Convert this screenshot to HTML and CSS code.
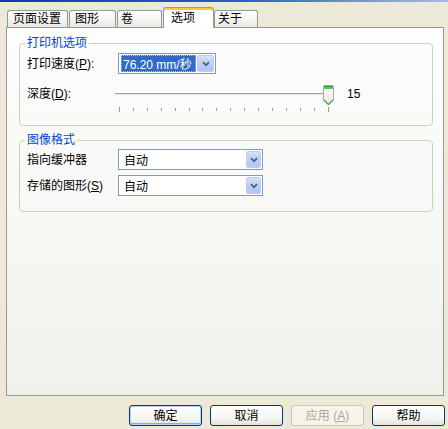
FILE: index.html
```html
<!DOCTYPE html>
<html lang="zh-CN">
<head>
<meta charset="utf-8">
<title>选项</title>
<link rel="stylesheet" href="styles.css">
</head>
<body>
<div class="edge"></div>
<div class="tabs">
  <div class="tab w1">页面设置</div>
  <div class="tab w2">图形</div>
  <div class="tab w3">卷</div>
  <div class="tab sel">选项</div>
  <div class="tab w5">关于</div>
</div>
<div class="panel">
  <fieldset class="group g1">
    <legend>打印机选项</legend>
    <div class="row">
      <span class="lbl">打印速度(<u>P</u>):</span>
      <div class="combo speed">
        <span class="val hl">76.20 mm/秒</span>
        <span class="drop d17"><svg width="8" height="6" viewBox="0 0 8 6"><path d="M1 1.2 L4 4.3 L7 1.2" fill="none" stroke="#4D6185" stroke-width="1.8"/></svg></span>
      </div>
    </div>
    <div class="row slider-row">
      <span class="lbl short">深度(<u>D</u>):</span>
      <svg class="slider" width="228" height="30" viewBox="0 0 228 30">
        <line x1="3" y1="10.5" x2="221" y2="10.5" stroke="#A3A29A" stroke-width="1"/>
        <line x1="3" y1="11.5" x2="221" y2="11.5" stroke="#E4E3DC" stroke-width="1"/>
        <g fill="#9C9C94">
          <rect x="7" y="24" width="1" height="5"/>
          <rect x="21" y="25" width="1" height="3"/>
          <rect x="35" y="25" width="1" height="3"/>
          <rect x="49" y="25" width="1" height="3"/>
          <rect x="63" y="25" width="1" height="3"/>
          <rect x="77" y="25" width="1" height="3"/>
          <rect x="90" y="25" width="1" height="3"/>
          <rect x="104" y="25" width="1" height="3"/>
          <rect x="118" y="25" width="1" height="3"/>
          <rect x="132" y="25" width="1" height="3"/>
          <rect x="146" y="25" width="1" height="3"/>
          <rect x="160" y="25" width="1" height="3"/>
          <rect x="174" y="25" width="1" height="3"/>
          <rect x="188" y="25" width="1" height="3"/>
          <rect x="202" y="25" width="1" height="3"/>
          <rect x="216" y="24" width="1" height="5"/>
        </g>
        <defs>
          <linearGradient id="tg" x1="0" y1="0" x2="0" y2="1">
            <stop offset="0" stop-color="#FFFFFF"/>
            <stop offset="1" stop-color="#E6E6DF"/>
          </linearGradient>
        </defs>
        <g transform="translate(211 2)">
          <path d="M0.5 2 Q0.5 0.5 2 0.5 H9 Q10.5 0.5 10.5 2 V15 L5.5 20 L0.5 15 Z" fill="url(#tg)" stroke="#A7A89F"/>
          <rect x="1" y="1" width="9" height="1" fill="#1FA01F"/>
          <rect x="1" y="2" width="9" height="2" fill="#5BC85B"/>
          <path d="M1 15 L5.5 19.5 L10 15" fill="none" stroke="#46B046" stroke-width="1.2"/>
        </g>
      </svg>
      <span class="num">15</span>
    </div>
  </fieldset>
  <fieldset class="group g2">
    <legend>图像格式</legend>
    <div class="row">
      <span class="lbl">指向缓冲器</span>
      <div class="combo wide">
        <span class="val">自动</span>
        <span class="drop d15"><svg width="8" height="6" viewBox="0 0 8 6"><path d="M1 1.2 L4 4.3 L7 1.2" fill="none" stroke="#4D6185" stroke-width="1.8"/></svg></span>
      </div>
    </div>
    <div class="row r2">
      <span class="lbl">存储的图形(<u>S</u>)</span>
      <div class="combo wide">
        <span class="val">自动</span>
        <span class="drop d15"><svg width="8" height="6" viewBox="0 0 8 6"><path d="M1 1.2 L4 4.3 L7 1.2" fill="none" stroke="#4D6185" stroke-width="1.8"/></svg></span>
      </div>
    </div>
  </fieldset>
</div>
<div class="buttons">
  <button class="btn default">确定</button>
  <button class="btn">取消</button>
  <button class="btn disabled">应用 (<u>A</u>)</button>
  <button class="btn">帮助</button>
</div>
</body>
</html>
```

FILE: styles.css
```css
* { box-sizing: border-box; }
html, body { margin: 0; padding: 0; }
body {
  width: 448px;
  height: 429px;
  overflow: hidden;
  background: #ECE9D8;
  font-family: "Liberation Sans", "Noto Sans CJK SC", sans-serif;
  font-size: 12px;
  color: #000;
}
u { text-decoration: underline; text-underline-offset: 1px; }

.edge {
  height: 2px;
  background: linear-gradient(90deg, #0B3CA8, #2F5FC0 55%, #A9BCE0);
}

.tabs {
  display: flex;
  align-items: flex-end;
  height: 21px;
  margin: 5px 0 -1px 7px;
  position: relative;
  z-index: 1;
}
.tab {
  height: 17px;
  margin: 0 1px 1px 0;
  padding: 0 0 0 5px;
  border: 1px solid #919B9C;
  border-bottom: none;
  border-radius: 3px 3px 0 0;
  background: linear-gradient(#FFFFFF, #F3F3EF 60%, #E8E7E0);
  line-height: 16px;
  white-space: nowrap;
}
.w1 { width: 61px; }
.w2 { width: 47px; }
.w3 { width: 45px; padding-left: 3px; }
.w5 { width: 44px; margin-right: 0; padding-left: 3px; }
.tab.sel {
  width: 51px;
  height: 21px;
  margin: 0;
  padding-left: 7px;
  background: #FFFFFF;
  border-top: 1px solid #E68B2C;
  box-shadow: inset 0 2px 0 #FFC73C;
  line-height: 20px;
}

.panel {
  height: 369px;
  margin: 0 4px 0 6px;
  padding: 8px 10px 0 12px;
  border: 1px solid #919B9C;
  background: linear-gradient(#FDFDFE, #F7F7F4 55%, #F1F0EB);
}

.group {
  margin: 0;
  min-width: 0;
  border: 1px solid #D0D0BF;
  border-radius: 4px;
  padding: 3px 7px 12px 7px;
}
.group legend {
  margin-left: -2px;
  padding: 0 2px;
  line-height: 14px;
  color: #0046D5;
}
.g2 { margin-top: 7px; padding: 2px 7px 15px 7px; }

.row {
  display: flex;
  align-items: center;
  height: 21px;
}
.r2 { margin-top: 5px; }
.lbl {
  width: 91px;
  flex: none;
  line-height: 14px;
  white-space: nowrap;
}
.slider-row {
  height: 30px;
  margin-top: 9px;
  align-items: flex-start;
}
.lbl.short { width: 85px; margin-top: 4px; }
.slider { display: block; flex: none; }
.num { margin: 4px 0 0 7px; line-height: 14px; }

.combo {
  display: flex;
  height: 21px;
  padding: 1px;
  border: 1px solid #7F9DB9;
  background: #FFFFFF;
  flex: none;
}
.speed { width: 98px; }
.wide { width: 145px; }
.val {
  flex: 1;
  display: flex;
  align-items: center;
  padding-left: 4px;
  white-space: nowrap;
}
.val.hl {
  margin: 0 1px 0 1px;
  padding-left: 2px;
  background: #316AC5;
  color: #FFFFFF;
  outline: 1px dotted #E8C070;
  outline-offset: -1px;
}
.drop {
  display: flex;
  align-items: center;
  justify-content: center;
  border: 1px solid #BCCDF5;
  border-radius: 2px;
  background: linear-gradient(#D4E0FC, #BCCEF8 50%, #B0C5F5);
}
.d17 { width: 17px; }
.d15 { width: 15px; }

.buttons {
  display: flex;
  justify-content: flex-end;
  gap: 8px;
  margin: 9px 3px 0 0;
}
.btn {
  width: 73px;
  height: 21px;
  padding: 0;
  border: 1px solid #003C74;
  border-radius: 3px;
  background: linear-gradient(#FFFFFF, #F4F4F0 70%, #E3E1D8);
  font: inherit;
  color: #000;
  line-height: 18px;
}
.btn.default {
  box-shadow: inset 0 0 0 1px #BCD0F7, inset 0 -1px 0 1px #8DAAEA;
}
.btn.disabled {
  border-color: #C9C7BA;
  background: #F5F4EA;
  color: #ACA899;
}
```
